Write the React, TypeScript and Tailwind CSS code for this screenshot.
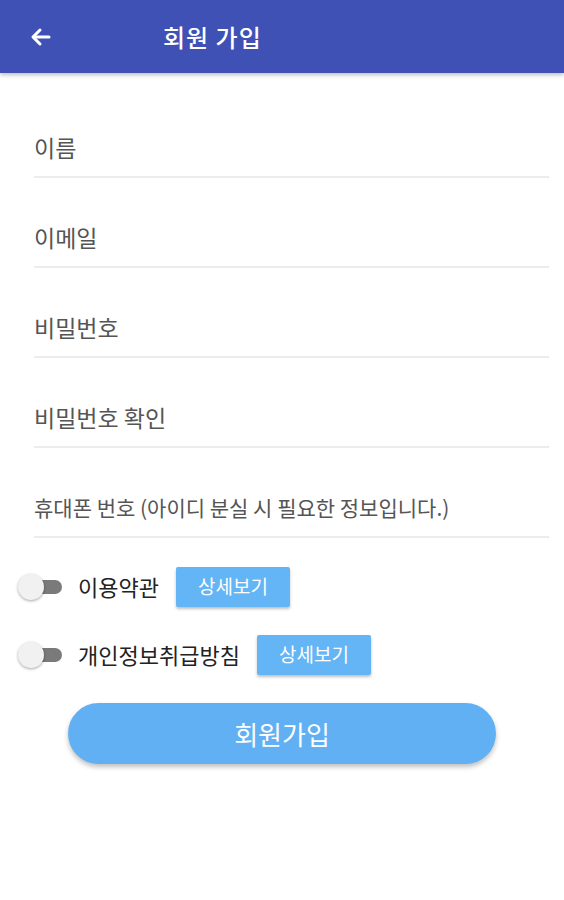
import { useState } from "react";

const fields = [
  { label: "이름", size: "text-[23px]" },
  { label: "이메일", size: "text-[23px]" },
  { label: "비밀번호", size: "text-[23px]" },
  { label: "비밀번호 확인", size: "text-[23px]" },
  { label: "휴대폰 번호 (아이디 분실 시 필요한 정보입니다.)", size: "text-[21px]" },
];

function Toggle() {
  const [on, setOn] = useState(false);
  return (
    <button
      type="button"
      onClick={() => setOn(!on)}
      className="relative w-[46px] h-[26px] shrink-0"
    >
      <span className="absolute left-[10px] right-[2px] top-[6px] h-[14px] rounded-full bg-[#7a7a7a]" />
      <span
        className={
          on
            ? "absolute top-0 left-[20px] w-[26px] h-[26px] rounded-full bg-[#64b5f6] shadow-[0_1px_3px_rgba(0,0,0,0.35)]"
            : "absolute top-0 left-0 w-[26px] h-[26px] rounded-full bg-[#f1f1f1] shadow-[0_1px_3px_rgba(0,0,0,0.35)]"
        }
      />
    </button>
  );
}

function AgreeRow({ label }: { label: string }) {
  return (
    <div className="flex items-center h-[41px]">
      <Toggle />
      <span className="ml-[14px] text-[22px] text-[#222]">{label}</span>
      <button
        type="button"
        className="ml-[17px] w-[114px] h-[40px] bg-[#64b5f6] text-white text-[19px] rounded-[2px] shadow-[0_2px_3px_rgba(0,0,0,0.25)]"
      >
        상세보기
      </button>
    </div>
  );
}

export default function App() {
  return (
    <div
      className="w-[564px] h-[900px] bg-white"
      style={{ fontFamily: '"Noto Sans CJK KR", "Noto Sans", sans-serif' }}
    >
      <header className="h-[73px] bg-[#3f51b5] flex items-center shadow-[0_2px_4px_rgba(0,0,0,0.25)]">
        <svg
          className="ml-[29px] mt-[1px]"
          width="24"
          height="24"
          viewBox="0 0 24 24"
          fill="none"
          stroke="white"
          strokeWidth="3"
          strokeLinecap="round"
          strokeLinejoin="round"
        >
          <path d="M20 12H5" />
          <path d="M11 5l-7 7 7 7" />
        </svg>
        <h1 className="ml-[110px] text-[24px] font-medium text-white tracking-[1px]">
          회원 가입
        </h1>
      </header>

      <form className="flex flex-col pt-[15px] pl-[34px] pr-[15px]">
        {fields.map((f) => (
          <div
            key={f.label}
            className="h-[90px] flex items-end border-b-2 border-[#ececec] pb-[17px]"
          >
            <span className={`${f.size} leading-[24px] text-[#555]`}>{f.label}</span>
          </div>
        ))}
      </form>

      <div className="flex flex-col gap-[27px] pl-[18px] mt-[28px]">
        <AgreeRow label="이용약관" />
        <AgreeRow label="개인정보취급방침" />
      </div>

      <div className="flex justify-center mt-[28px]">
        <button
          type="button"
          className="w-[428px] h-[61px] rounded-full bg-[#62b0f4] text-white text-[26px] shadow-[0_3px_5px_rgba(0,0,0,0.25)]"
        >
          회원가입
        </button>
      </div>
    </div>
  );
}
